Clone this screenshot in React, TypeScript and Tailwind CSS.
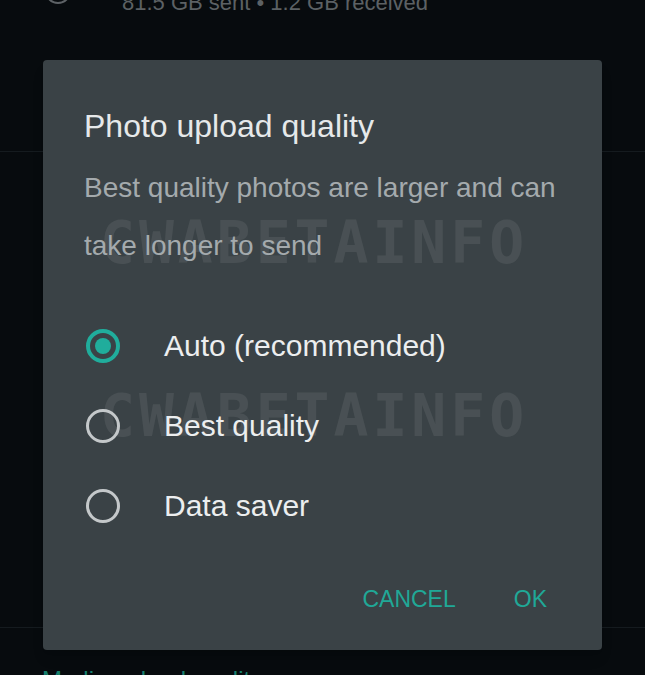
import React from "react";

const options = [
  { label: "Auto (recommended)", checked: true },
  { label: "Best quality", checked: false },
  { label: "Data saver", checked: false },
];

function Radio({ checked }: { checked: boolean }) {
  if (checked) {
    return (
      <span className="flex size-[34px] items-center justify-center rounded-full border-[4px] border-[#20ad9c]">
        <span className="size-[16px] rounded-full bg-[#20ad9c]" />
      </span>
    );
  }
  return <span className="size-[34px] rounded-full border-[3px] border-[#c4c8ca]" />;
}

function Watermark({ top }: { top: number }) {
  return (
    <div
      className="pointer-events-none absolute left-[57px] select-none font-['DejaVu_Sans_Mono',monospace] text-[58px] leading-none font-bold tracking-[4px] text-white/[0.08]"
      style={{ top }}
    >
      CWABETAINFO
    </div>
  );
}

export default function App() {
  return (
    <div className="relative h-[675px] w-[645px] overflow-hidden bg-[#070b0e] font-['Liberation_Sans',Arial,sans-serif]">
      {/* settings list behind the dialog */}
      <div className="flex flex-col">
        <div className="-mt-[14px] flex h-[166px] items-start border-b border-[#151b1f] pl-[45px]">
          <span className="mt-[-8px] size-[26px] rounded-full border-2 border-[#5d6266]" />
          <span className="ml-[51px] pt-[6px] text-[22px] leading-none text-[#5c6164]">
            81.5 GB sent • 1.2 GB received
          </span>
        </div>
        <div className="h-[476px] border-b border-[#151b1f]" />
        <div className="pt-[40px] pl-[42px] text-[24px] leading-none text-[#17806f]">
          Media upload quality
        </div>
      </div>

      {/* dialog */}
      <div className="absolute top-[60px] left-[43px] flex h-[590px] w-[559px] flex-col rounded-[4px] bg-[#3a4246] pt-[48px] pl-[41px] pr-[20px] shadow-lg">
        <Watermark top={154} />
        <Watermark top={327} />
        <h2 className="relative text-[32px] leading-[36px] text-[#e6e9ea]">Photo upload quality</h2>
        <p className="relative mt-[15px] whitespace-nowrap text-[28px] leading-[58px] text-[#a4aaad]">
          Best quality photos are larger and can
          <br />
          take longer to send
        </p>
        <div className="relative mt-[54px] flex flex-col gap-[46px]">
          {options.map((o) => (
            <label key={o.label} className="flex h-[34px] items-center gap-[44px] pl-[2px]">
              <Radio checked={o.checked} />
              <span className="text-[30px] leading-none text-[#eceeef]">{o.label}</span>
            </label>
          ))}
        </div>
        <div className="relative mt-auto mb-[39px] flex justify-end gap-[58px] pr-[35px]">
          <button className="text-[23px] leading-none text-[#20a897]">CANCEL</button>
          <button className="text-[23px] leading-none text-[#20a897]">OK</button>
        </div>
      </div>
    </div>
  );
}
